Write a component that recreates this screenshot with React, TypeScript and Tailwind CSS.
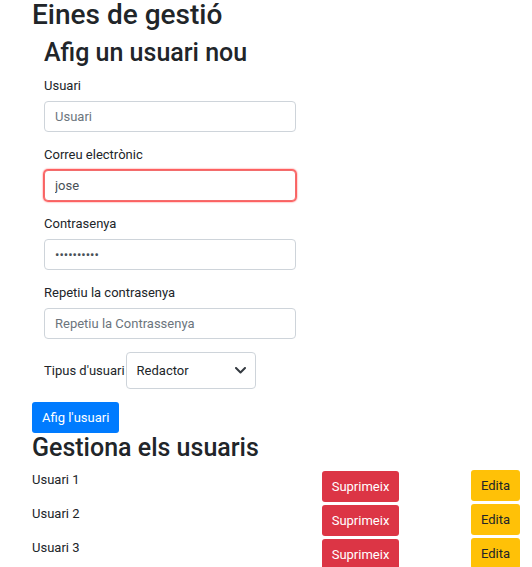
import React from 'react';

const Input = ({
  label,
  placeholder,
  value,
  type = 'text',
  invalid = false,
}: {
  label: string;
  placeholder: string;
  value?: string;
  type?: string;
  invalid?: boolean;
}) => (
  <div className="mb-[13px]">
    <label className="block h-5 leading-5 mb-[5px]">{label}</label>
    <input
      type={type}
      placeholder={placeholder}
      defaultValue={value}
      readOnly
      className={`block w-[252px] h-[31px] px-2.5 bg-white border rounded-[4px] text-[13px] text-[#495057] placeholder:text-[#6c757d] outline-none ${
        invalid ? 'border-[#f26d6d] shadow-[0_0_1.5px_1px_#ff3b3b]' : 'border-[#ced4da]'
      }`}
    />
  </div>
);

const users = ['Usuari 1', 'Usuari 2', 'Usuari 3'];

const App = () => {
  return (
    <div className="pl-8 pr-3 font-['Roboto',sans-serif] text-[13px] leading-[19.5px] text-[#212529]">
      <h1 className="text-[28px] font-medium leading-[30px] mb-2">Eines de gestió</h1>

      <div className="px-3">
        <h2 className="text-[25px] font-medium leading-[30px] mb-2">Afig un usuari nou</h2>
        <Input label="Usuari" placeholder="Usuari" />
        <Input label="Correu electrònic" placeholder="Correu electrònic" value="jose" type="email" invalid />
        <Input label="Contrasenya" placeholder="Contrasenya" value="1234567890" type="password" />
        <Input label="Repetiu la contrasenya" placeholder="Repetiu la Contrassenya" type="password" />

        <div className="flex items-center gap-px">
          <label>Tipus d'usuari</label>
          <div className="relative">
            <select
              defaultValue="Redactor"
              className="appearance-none block w-[130px] h-[37px] pl-2.5 pr-8 bg-white border border-[#ced4da] rounded-[4px] text-[13px] text-[#212529] outline-none"
            >
              <option>Administrador</option>
              <option>Redactor</option>
              <option>Lector</option>
            </select>
            {/* chevron */}
            <svg
              className="absolute right-[10px] top-[15px] pointer-events-none"
              width="11"
              height="7"
              viewBox="0 0 11 7"
              fill="none"
            >
              <path d="M1 1l4.5 4.5L10 1" stroke="#343a40" strokeWidth="2" strokeLinecap="round" strokeLinejoin="round" />
            </svg>
          </div>
        </div>
      </div>

      <button className="mt-[13px] h-[31px] px-2.5 rounded-[3px] bg-[#007bff] text-white text-[13px]">
        Afig l'usuari
      </button>

      <h2 className="text-[25px] font-medium leading-[30px] mb-[7px]">Gestiona els usuaris</h2>

      {users.map((u) => (
        <div key={u} className="grid grid-cols-[290px_149px_49px] h-[34px]">
          <div>{u}</div>
          <div>
            <button className="mt-px h-[31px] w-[77px] rounded-[3px] bg-[#dc3545] text-white text-[13px]">
              Suprimeix
            </button>
          </div>
          <div>
            <button className="h-[31px] w-[49px] rounded-[3px] bg-[#ffc107] text-[#212529] text-[13px]">
              Edita
            </button>
          </div>
        </div>
      ))}
    </div>
  );
};

export default App;
